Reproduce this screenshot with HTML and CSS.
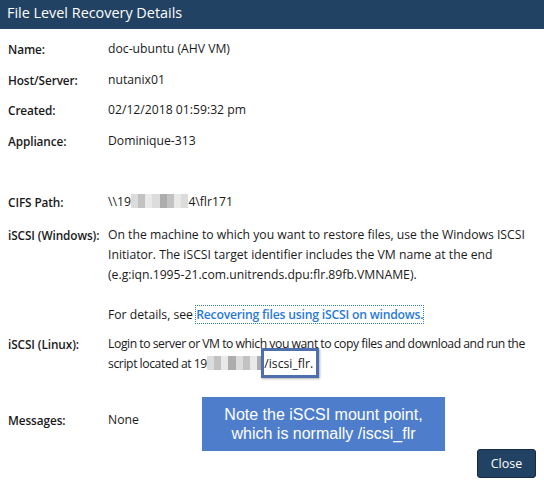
FILE: index.html
```html
<!DOCTYPE html>
<html>
<head>
<meta charset="utf-8">
<link rel="stylesheet" href="styles.css">
</head>
<body>
<div class="dialog">
  <div class="header">File Level Recovery Details</div>
  <div class="content">
    <div class="row"><div class="label">Name:</div><div class="value">doc-ubuntu (AHV VM)</div></div>
    <div class="row"><div class="label">Host/Server:</div><div class="value">nutanix01</div></div>
    <div class="row"><div class="label">Created:</div><div class="value">02/12/2018 01:59:32 pm</div></div>
    <div class="row"><div class="label">Appliance:</div><div class="value">Dominique-313</div></div>
    <div class="row r-cifs"><div class="label">CIFS Path:</div><div class="value">\\19<span class="blur"><i class="b1"></i><i class="b2"></i><i class="b3"></i><i class="b1"></i><i class="b4"></i><i class="b2"></i><i class="b3"></i><i class="b1"></i></span>4\flr171</div></div>
    <div class="row r-win"><div class="label">iSCSI (Windows):</div><div class="value">On the machine to which you want to restore files, use the Windows ISCSI<br>Initiator. The iSCSI target identifier includes the VM name at the end<br>(e.g:iqn.1995-21.com.unitrends.dpu:flr.89fb.VMNAME).<br><br>For details, see <a class="link" href="#">Recovering files using iSCSI on windows.</a></div></div>
    <div class="row r-linux"><div class="label">iSCSI (Linux):</div><div class="value tight">Login to server or VM to which you want to copy files and download and run the<br>script located at 19<span class="blur"><i class="b1"></i><i class="b2"></i><i class="b3"></i><i class="b4"></i><i class="b1"></i><i class="b2"></i><i class="b3"></i><i class="b4"></i></span><span class="hl">/iscsi_flr.</span></div></div>
    <div class="row r-msg"><div class="label">Messages:</div><div class="value">None</div></div>
  </div>
  <div class="note">Note the iSCSI mount point,<br>which is normally /iscsi_flr</div>
  <button class="close">Close</button>
</div>
</body>
</html>
```
FILE: styles.css
```css
html, body { margin: 0; padding: 0; background: #fff; }
body { width: 544px; height: 489px; overflow: hidden; font-family: "Open Sans", "Lato", sans-serif; font-size: 12.2px; color: #1a1a1a; }
.dialog { position: relative; width: 544px; height: 489px; }
.header { height: 29px; background: #224263; color: #fff; font-size: 14.4px; line-height: 26px; padding-left: 7px; }
.content { padding: 10px 0 0 8px; }
.row { display: flex; line-height: 20px; margin-top: 10.5px; }
.row:first-child { margin-top: 0; }
.row.r-cifs { margin-top: 41.5px; }
.row.r-win { margin-top: 13px; }
.row.r-linux { margin-top: 9px; }
.row.r-msg { margin-top: 36px; }
.label { width: 100px; flex: none; font-weight: 600; font-size: 11.8px; letter-spacing: -0.1px; white-space: nowrap; }
.value { flex: 1; white-space: nowrap; }
.value.tight { letter-spacing: -0.4px; word-spacing: -0.3px; }
.blur { display: inline-flex; height: 14px; vertical-align: -2px; }
.blur i { display: block; width: 7.2px; height: 14px; }
.b1 { background: #dcdcdc; }
.b2 { background: #c2c2c2; }
.b3 { background: #e9e9e9; }
.b4 { background: #adadad; }
.link { color: #2a7ad6; font-weight: 600; text-decoration: none; outline: 1px dotted #2a7ad6; letter-spacing: -0.2px; }
.hl { position: relative; letter-spacing: 0; }
.hl::after { content: ""; position: absolute; left: -3px; right: -6px; top: -7.5px; bottom: -5.5px; border: 3px solid #4e6fae; box-shadow: 1px 1px 2px rgba(0,0,0,0.3); }
.note { position: absolute; left: 202px; top: 397px; width: 243px; height: 54px; background: #4e7ecb; color: #fff; font-family: "Liberation Sans", Arial, sans-serif; font-size: 16px; line-height: 19.3px; text-align: center; padding-top: 7.5px; box-sizing: border-box; }
.close { position: absolute; left: 477px; top: 449px; width: 59px; height: 29px; background: #224263; color: #fff; border: 1px solid #162c45; border-radius: 3px; font-family: "Open Sans", sans-serif; font-size: 12.5px; padding: 0; }
```
